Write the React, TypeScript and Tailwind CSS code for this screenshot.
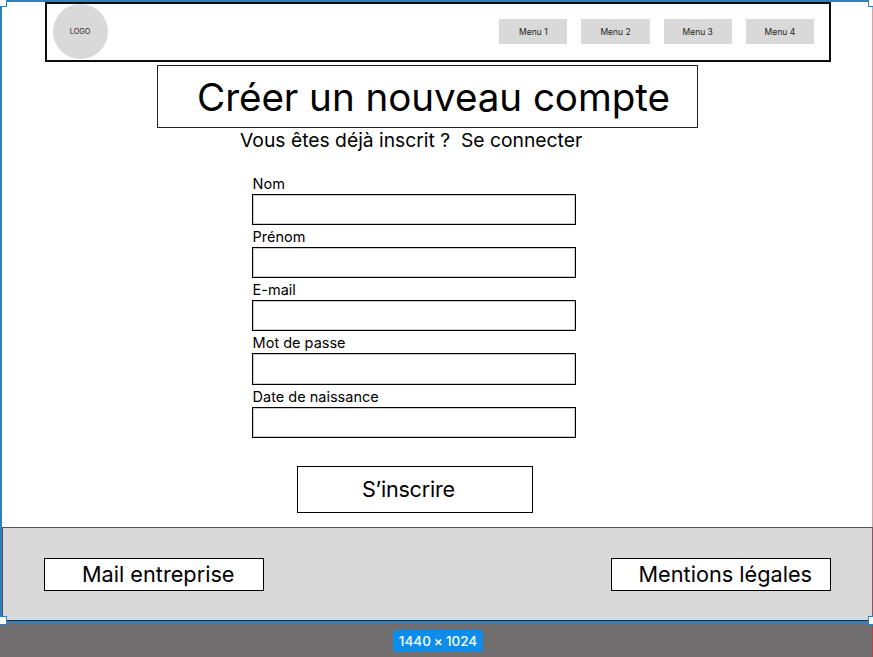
const menus = ["Menu 1", "Menu 2", "Menu 3", "Menu 4"];

const fields = [
  { label: "Nom", box: "h-[31px]" },
  { label: "Prénom", box: "h-[31px]" },
  { label: "E-mail", box: "h-[31px]" },
  { label: "Mot de passe", box: "h-[32px]" },
  { label: "Date de naissance", box: "h-[31px]" },
];

function Header() {
  return (
    <header className="ml-[43px] flex h-[60px] w-[786px] items-center justify-between border-2 border-[#0c0c0c] pr-[15px] pb-[1px] pl-[6px]">
      <div className="flex size-[55px] items-center justify-center rounded-full bg-[#d9d9d9] pt-[2px] pr-[1px] text-[7.3px] text-[#222]">
        LOGO
      </div>
      <nav className="flex gap-[14px] pb-[1px]">
        {menus.map((menu) => (
          <a key={menu} className="flex h-[25px] w-[68.2px] items-center justify-center bg-[#d9d9d9] pt-[2px] text-[8.5px] text-[#222]">
            {menu}
          </a>
        ))}
      </nav>
    </header>
  );
}

function SignUpForm() {
  return (
    <form className="mt-[20px] ml-[250px] w-[324px]">
      {fields.map((field) => (
        <div key={field.label}>
          <label className="flex h-[22px] items-center pt-[2px] pl-[0.6px] text-[14.5px] whitespace-pre">{field.label}</label>
          <div className={`border border-black bg-white ring-1 ring-black/20 ring-inset ${field.box}`} />
        </div>
      ))}
      <button
        type="button"
        className="mt-[28px] ml-[45px] flex h-[47px] w-[236px] items-center border border-black pl-[64px] text-[21.6px] tracking-[-0.25px]"
      >
        S’inscrire
      </button>
    </form>
  );
}

function Footer() {
  return (
    <footer className="mt-auto flex h-[93px] items-center justify-between border-t border-l border-[#555] bg-[#d9d9d9] pr-[42px] pl-[41px]">
      <div className="flex h-[33px] w-[220px] items-center border border-black bg-white pl-[37px] text-[21.7px]">Mail entreprise</div>
      <div className="flex h-[33px] w-[220px] items-center border border-black bg-white pl-[26.5px] text-[21.7px]">Mentions légales</div>
    </footer>
  );
}

export default function App() {
  return (
    <div className="relative h-[657px] w-[873px] overflow-hidden bg-[#706e6e] font-['Inter',sans-serif] text-black">
      <main className="flex h-[620px] flex-col border-t-2 border-l-2 border-[#2e80bf] bg-white">
        <Header />
        <h1 className="mt-[3px] ml-[155px] flex h-[63px] w-[541px] items-center border border-[#222] pt-[2px] pl-[39px] text-[38.6px] tracking-[-0.05px] whitespace-pre">
          Créer un nouveau compte
        </h1>
        <p className="ml-[238px] flex h-[24px] items-center text-[19.3px] whitespace-pre">Vous êtes déjà inscrit ?  Se connecter</p>
        <SignUpForm />
        <Footer />
      </main>
      <div className="h-[3px] border-t border-[#073b66] bg-[#417ba5]" />
      <div className="mt-[7px] flex justify-center pl-[3px]">
        <span className="flex h-[22px] w-[90px] items-center justify-center gap-[3px] rounded-[3px] bg-[#0d8ce9] pt-[1px] text-[13.5px] font-medium text-white">
          <span>1440</span>
          <span>×</span>
          <span>1024</span>
        </span>
      </div>
      <div className="absolute top-0 right-0 h-[527px] w-px bg-[#d5a3aa]" />
      <div className="absolute top-[527px] right-0 h-[93px] w-px bg-[#875566]" />
      <div className="absolute top-[620px] right-0 h-[37px] w-px bg-[#a34c42]" />
      <i className="absolute -top-[2px] -left-[2px] size-[9px] border border-[#2e80bf] bg-white" />
      <i className="absolute -top-[2px] left-[868px] size-[9px] border border-[#2e80bf] bg-white" />
      <i className="absolute top-[616px] -left-[2px] size-[9px] border border-[#2e80bf] bg-white" />
      <i className="absolute top-[616px] left-[868px] size-[9px] border border-[#2e80bf] bg-white" />
    </div>
  );
}
